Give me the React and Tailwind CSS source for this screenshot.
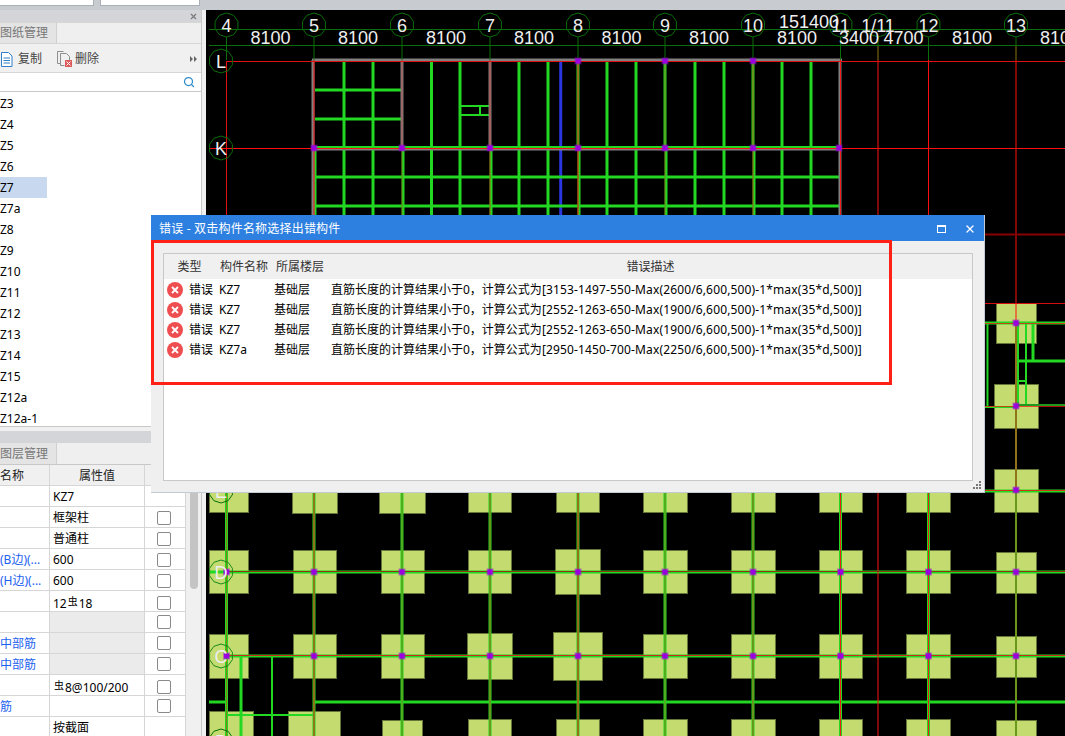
import React from 'react';
import { Search, X } from 'lucide-react';

const FONT = { fontFamily: '"Noto Sans", "Noto Sans CJK SC", sans-serif' };

const listItems = ['Z3', 'Z4', 'Z5', 'Z6', 'Z7', 'Z7a', 'Z8', 'Z9', 'Z10', 'Z11', 'Z12', 'Z13', 'Z14', 'Z15', 'Z12a', 'Z12a-1'];

const propRows = [
    { name: '', value: 'KZ7', noCheck: true },
    { name: '', value: '框架柱' },
    { name: '', value: '普通柱' },
    { name: '(B边)(...', value: '600', blue: true },
    { name: '(H边)(...', value: '600', blue: true },
    { name: '', value: 'steel1' },
    { name: '', value: '', gray: true },
    { name: '中部筋', value: '', gray: true, blue: true },
    { name: '中部筋', value: '', gray: true, blue: true },
    { name: '', value: 'steel2' },
    { name: '筋', value: '', blue: true },
    { name: '', value: '按截面', noCheck: true },
];

const errors = [
    { name: 'KZ7', formula: '[3153-1497-550-Max(2600/6,600,500)-1*max(35*d,500)]' },
    { name: 'KZ7', formula: '[2552-1263-650-Max(1900/6,600,500)-1*max(35*d,500)]' },
    { name: 'KZ7', formula: '[2552-1263-650-Max(1900/6,600,500)-1*max(35*d,500)]' },
    { name: 'KZ7a', formula: '[2950-1450-700-Max(2250/6,600,500)-1*max(35*d,500)]' },
];

// 钢筋符号
const Steel = () => <span className="text-[10px] align-[3px] mx-px">虫</span>;

const GREEN = '#22d822';
const RED = '#ff1010';
const DIM = '#0a6e0a';

const colX = [226.5, 314, 402, 490, 578, 665, 753, 840.5, 928.5, 1016];
const axes = [
    [226.5, '4'], [314, '5'], [402, '6'], [490, '7'], [578, '8'], [665, '9'], [753, '10'],
    [840.5, '11'], [878, '1/11'], [928.5, '12'], [1016, '13'],
];
const dims = [[270.5, '8100'], [358, '8100'], [446, '8100'], [534, '8100'], [621.5, '8100'], [709, '8100'], [797, '8100'], [859, '3400'], [903.5, '4700'], [972, '8100'], [1060, '8100']];
const upperBars = [344, 373, 431.5, 460, 519, 548, 607, 636, 695, 724, 782, 811];

// 竖向轴线的红色在图中深浅不一
const redOpacity = { 226.5: 0.45, 314: 0.95, 402: 0.4, 490: 0.6, 578: 1, 665: 0.4, 753: 0.6, 840.5: 0.9, 928.5: 0.9, 1016: 0.65 };

const pillars = [
    [209, 469, 39, 43], [292, 469, 45, 44], [379, 469, 46, 44], [468, 469, 43, 43], [556, 469, 43, 43],
    [643, 469, 44, 43], [731, 469, 44, 43], [819, 469, 43, 43], [906, 469, 44, 43], [994, 469, 44, 43],
    [209, 550, 39, 43], [293, 550, 43, 43], [381, 550, 43, 43], [468, 550, 43, 43], [555, 549, 45, 45],
    [643, 550, 44, 43], [731, 550, 44, 43], [819, 550, 43, 43], [906, 550, 44, 43], [996, 552, 40, 41],
    [209, 634, 39, 44], [293, 634, 43, 44], [381, 634, 43, 44], [467, 633, 45, 46], [553, 632, 49, 48],
    [643, 634, 44, 44], [731, 634, 44, 44], [819, 634, 43, 44], [906, 634, 44, 44], [996, 636, 40, 41],
    [209, 711, 44, 30], [288, 711, 52, 30], [382, 720, 40, 20], [468, 719, 43, 20], [556, 719, 43, 20],
    [643, 719, 44, 20], [731, 719, 44, 20], [819, 719, 43, 20], [906, 719, 44, 20], [996, 720, 40, 20],
    [996, 303, 40, 40], [994, 384, 44, 44],
];

const octagon = (cx, cy, r) => {
    const pts = [];
    for (let i = 0; i < 10; i++) {
        const a = (Math.PI * 2 * i) / 10 + Math.PI / 10;
        pts.push(`${(cx + r * Math.cos(a)).toFixed(1)},${(cy + r * Math.sin(a)).toFixed(1)}`);
    }
    return pts.join(' ');
};

const Node = ({ x, y }) => (
    <g>
        <rect x={x - 3.5} y={y - 3.5} width="7" height="7" fill="#9a00e0" opacity="0.45" />
        <rect x={x - 2.5} y={y - 2.5} width="5" height="5" fill="#9a00e0" />
    </g>
);

const Canvas = () => (
    <svg viewBox="206 10 859 726" className="block w-[859px] h-[726px] bg-black" style={{ fontFamily: '"Liberation Sans", sans-serif' }}>
        {/* 柱 */}
        {pillars.map(([x, y, w, h], i) => (
            <rect key={i} x={x + 0.5} y={y + 0.5} width={w} height={h} fill="#c3db6f" stroke="#66763a" />
        ))}

        {/* 上部梁 */}
        {upperBars.map((x) => (
            <line key={x} x1={x} y1={61} x2={x} y2={230} stroke={GREEN} strokeWidth="3" />
        ))}
        <line x1="560.7" y1="61" x2="560.7" y2="230" stroke="#2a36e0" strokeWidth="3" />
        {[314, 402, 490, 578, 665, 753].map((x) => (
            <line key={x} x1={x + 1} y1={148} x2={x + 1} y2={230} stroke={GREEN} strokeWidth="3" />
        ))}
        <line x1="578" y1="61" x2="578" y2="148" stroke={GREEN} strokeWidth="3" />
        <line x1="665" y1="61" x2="665" y2="148" stroke={GREEN} strokeWidth="3" />
        <line x1="753" y1="61" x2="753" y2="148" stroke={GREEN} strokeWidth="3" />
        {[90, 119].map((y) => (
            <line key={y} x1="315" y1={y} x2="401" y2={y} stroke={GREEN} strokeWidth="3" />
        ))}
        {[177, 206].map((y) => (
            <line key={y} x1="315" y1={y} x2="840" y2={y} stroke={GREEN} strokeWidth="3" />
        ))}
        <line x1="461" y1="106" x2="489" y2="106" stroke={GREEN} strokeWidth="2" />
        <line x1="461" y1="115" x2="489" y2="115" stroke={GREEN} strokeWidth="2" />
        <line x1="480" y1="106" x2="480" y2="115" stroke={GREEN} strokeWidth="2" />

        {/* 灰色边梁 */}
        <line x1="312" y1="60" x2="842" y2="60" stroke="#808080" strokeWidth="3" />
        <line x1="313" y1="60" x2="313" y2="230" stroke="#808080" strokeWidth="3" />
        <line x1="402" y1="60" x2="402" y2="148" stroke="#808080" strokeWidth="3" />
        <line x1="490" y1="60" x2="490" y2="148" stroke="#808080" strokeWidth="3" />
        <line x1="840" y1="60" x2="840" y2="230" stroke="#808080" strokeWidth="3" />
        <line x1="314" y1="149" x2="840" y2="149" stroke="#808080" strokeWidth="3" />
        <line x1="315" y1="147" x2="840" y2="147" stroke={GREEN} strokeWidth="2" />

        {/* 下部梁 */}
        {colX.slice(0, 9).map((x) => (
            <line key={x} x1={x} y1={493} x2={x} y2={736} stroke={GREEN} strokeWidth="3" />
        ))}
        {[572, 656].map((y) => (
            <line key={y} x1={y === 656 ? 226 : 209} y1={y} x2="1065" y2={y} stroke={GREEN} strokeWidth="3" />
        ))}
        <line x1="209" y1="702" x2="226" y2="702" stroke={GREEN} strokeWidth="3" />
        <line x1="315" y1="702" x2="1065" y2="702" stroke={GREEN} strokeWidth="3" />
        <line x1="241" y1="656" x2="241" y2="736" stroke={GREEN} strokeWidth="3" />
        <line x1="272" y1="656" x2="272" y2="736" stroke={GREEN} strokeWidth="2" />
        <line x1="226" y1="715" x2="314" y2="715" stroke={GREEN} strokeWidth="2" />

        {/* 右侧梁 */}
        <line x1="985" y1="323" x2="1065" y2="323" stroke={GREEN} strokeWidth="3" />
        <line x1="987.5" y1="323" x2="987.5" y2="406" stroke={GREEN} strokeWidth="2" />
        <line x1="1018" y1="323" x2="1018" y2="405" stroke={GREEN} strokeWidth="2" />
        <line x1="1026" y1="323" x2="1026" y2="405" stroke={GREEN} strokeWidth="2" />
        <line x1="1033" y1="323" x2="1033" y2="361" stroke={GREEN} strokeWidth="3" />
        <line x1="1018" y1="361" x2="1065" y2="361" stroke={GREEN} strokeWidth="3" />
        <line x1="1018" y1="381" x2="1026" y2="381" stroke={GREEN} strokeWidth="2" />
        <line x1="985" y1="407" x2="1016" y2="407" stroke={GREEN} strokeWidth="2" />
        <line x1="1016" y1="405" x2="1065" y2="405" stroke="#1f9a1f" strokeWidth="2" />
        <line x1="1016" y1="323" x2="1016" y2="736" stroke={GREEN} strokeWidth="2" />
        <line x1="985" y1="491" x2="1065" y2="491" stroke={GREEN} strokeWidth="3" />

        {/* 轴线 */}
        <line x1="226.5" y1="61" x2="226.5" y2="470" stroke="#e01010" />
        <line x1="878" y1="45" x2="878" y2="736" stroke={RED} />
        <line x1="928.5" y1="45" x2="928.5" y2="469" stroke={RED} />
        <line x1="1016" y1="45" x2="1016" y2="323" stroke={RED} />
        <line x1="1016" y1="323" x2="1016" y2="493" stroke={RED} />
        {colX.map((x) => (
            <line key={x} x1={x} y1="493" x2={x} y2="736" stroke={RED} opacity={redOpacity[x]} />
        ))}
        {[314, 402, 490, 578, 665, 753, 840.5].map((x) => (
            <line key={x} x1={x} y1="60" x2={x} y2="230" stroke={RED} opacity={redOpacity[x]} />
        ))}
        <line x1="226" y1="61.5" x2="1065" y2="61.5" stroke="#e01010" />
        <line x1="209" y1="148.5" x2="1065" y2="148.5" stroke={RED} />
        <line x1="985" y1="234.5" x2="1065" y2="234.5" stroke="#8a0000" strokeWidth="2" />
        <line x1="985" y1="303.5" x2="1065" y2="303.5" stroke="#d01010" />
        <line x1="985" y1="323.5" x2="1065" y2="323.5" stroke={RED} opacity="0.7" />
        <line x1="985" y1="406.5" x2="1065" y2="406.5" stroke={RED} opacity="0.7" />
        <line x1="985" y1="490.5" x2="1065" y2="490.5" stroke={RED} opacity="0.8" />
        <line x1="226" y1="571.5" x2="1065" y2="571.5" stroke="#8a3a10" />
        <line x1="226" y1="655.5" x2="1065" y2="655.5" stroke="#c8301a" />

        {/* 尺寸线 */}
        <line x1="209" y1="29.5" x2="1065" y2="29.5" stroke={DIM} />
        <line x1="209" y1="45.5" x2="1065" y2="45.5" stroke={DIM} />
        {axes.map(([x, label]) => (
            <g key={label}>
                <line x1={x} y1="37" x2={x} y2="60" stroke={DIM} />
                <polygon points={octagon(x, 25, 12)} fill="none" stroke={DIM} />
                <text x={x} y="32" textAnchor="middle" fontSize="18" fill="#eeeeee">{label}</text>
            </g>
        ))}
        {dims.map(([x, label], i) => (
            <text key={i} x={x} y="44" textAnchor="middle" fontSize="18" fill="#eeeeee">{label}</text>
        ))}
        <text x="809" y="28" textAnchor="middle" fontSize="18" fill="#eeeeee">151400</text>

        {/* 节点 */}
        {[[578, 61], [665, 61], [753, 61], [314, 148], [402, 148], [490, 148], [578, 148], [665, 148], [753, 148], [839, 148], [1016, 323], [1016, 406], [1016, 490]].map(([x, y]) => (
            <Node key={`${x}-${y}`} x={x} y={y} />
        ))}
        {[572, 656].flatMap((y) => colX.map((x) => <Node key={`${x}-${y}`} x={x} y={y} />))}

        {/* 左侧轴号 */}
        {[[61, 'L'], [148, 'K'], [491, 'E'], [572, 'D'], [656, 'C'], [741, 'B']].map(([y, label]) => (
            <g key={label}>
                <polygon points={octagon(221, y, 12)} fill="none" stroke={label === 'D' || label === 'C' ? '#1a8a1a' : DIM} />
                <text x="221" y={y + 7} textAnchor="middle" fontSize="18" fill="#eeeeee">{label}</text>
            </g>
        ))}
    </svg>
);

const CopyIcon = () => (
    <svg width="13" height="17" viewBox="0 0 13 17" className="shrink-0">
        <path d="M1.500 1.500h7l3.500 3.500v10.500h-10.500z" fill="#fff" stroke="#2f7fc9" />
        <path d="M3.500 7h6.500M3.500 9.500h6.500M3.500 12h6.500" stroke="#2f7fc9" />
    </svg>
);

const DeleteIcon = () => (
    <svg width="15" height="16" viewBox="0 0 15 16" className="shrink-0">
        <path d="M0.500 0.500h6M0.500 0.500v12h3" fill="none" stroke="#8f8f8f" />
        <path d="M3.500 2.500h6l3 3v4M3.500 2.500v12h4" fill="none" stroke="#8f8f8f" />
        <rect x="8" y="9" width="7" height="7" fill="#dc5a5a" />
        <path d="M9.500 10.500l4 4M13.500 10.500l-4 4" stroke="#fff" />
    </svg>
);

const ErrorIcon = () => (
    <svg width="16" height="16" viewBox="0 0 16 16" className="shrink-0">
        <circle cx="8" cy="8" r="8" fill="#ef4e50" />
        <path d="M5 5l6 6M11 5l-6 6" stroke="#fff" strokeWidth="1.800" />
    </svg>
);

const LeftPanel = () => (
    <aside className="w-[206px] shrink-0 flex flex-col bg-[#f0f0f0] h-full overflow-hidden text-xs text-[#222]">
        <div className="w-[202px] flex flex-col flex-1 min-h-0 border-r border-[#c8c8c8]">
            {/* 图纸管理 */}
            <div className="h-[12px] bg-[#d3d5d9] flex items-center justify-end pr-[3px]">
                <X size={9} strokeWidth={3} className="text-[#777]" />
            </div>
            <div className="h-[22px] flex bg-[#efefef] border-y border-[#d6d6d6]">
                <div className="w-[57px] bg-[#e4e4e4] border-r border-[#d0d0d0] text-[#777] flex items-center">图纸管理</div>
            </div>
            <div className="h-[29px] flex items-center pt-[2px] bg-[#f0f0f0] border-b border-[#d6d6d6]">
                <CopyIcon />
                <span className="ml-[5px] text-[#444]">复制</span>
                <span className="ml-[15px]"><DeleteIcon /></span>
                <span className="ml-[3px] text-[#444]">删除</span>
                <svg width="8" height="6" viewBox="0 0 8 6" className="ml-auto mr-[3px]">
                    <path d="M0 0l3 3-3 3zM4 0l3 3-3 3z" fill="#666" />
                </svg>
            </div>
            <div className="h-[19px] bg-white border-b border-[#c8c8c8] flex items-center justify-end pr-[6px]">
                <Search size={12} strokeWidth={2.500} className="text-[#2f8ccb]" />
            </div>
            <ul className="h-[334px] bg-white overflow-hidden pt-px">
                {listItems.map((item) => (
                    <li
                        key={item}
                        className={`h-[21px] w-[47px] leading-[21px] text-black whitespace-nowrap ${item === 'Z7' ? 'bg-[#c7d8ef]' : ''}`}
                    >
                        {item}
                    </li>
                ))}
            </ul>

            {/* 图层管理 */}
            <div className="h-[5px] border-t border-[#c8c8c8] bg-[#f0f0f0]" />
            <div className="h-[12px] bg-[#d3d5d9]" />
            <div className="h-[22px] bg-[#efefef] border-b border-[#c8c8c8] flex">
                <div className="w-[57px] bg-[#e4e4e4] border-r border-[#d0d0d0] text-[#777] flex items-center">图层管理</div>
            </div>
            <div className="flex flex-1 min-h-0 bg-white">
                <div className="w-[186px] shrink-0">
                    <div className="grid grid-cols-[50px_95px_41px] h-[21px] bg-[#f0f0f0] border-b border-[#d6d6d6] leading-[21px]">
                        <div className="border-r border-[#d6d6d6]">名称</div>
                        <div className="border-r border-[#d6d6d6] text-center">属性值</div>
                        <div className="border-r border-[#d6d6d6]" />
                    </div>
                    {propRows.map((row, i) => (
                        <div key={i} className="grid grid-cols-[50px_95px_41px] h-[21px] border-b border-[#d6d6d6] leading-[21px]">
                            <div className={`border-r border-[#d6d6d6] whitespace-nowrap overflow-hidden ${row.blue ? 'text-[#1c62f0]' : ''}`}>{row.name}</div>
                            <div className={`border-r border-[#d6d6d6] pl-[3px] text-black ${row.gray ? 'bg-[#ebebeb]' : ''}`}>
                                {row.value === 'steel1' ? <>12<Steel />18</> : row.value === 'steel2' ? <><Steel />8@100/200</> : row.value}
                            </div>
                            <div className="border-r border-[#d6d6d6] flex items-center justify-center pr-[2px]">
                                {!row.noCheck && <span className="w-[14px] h-[14px] bg-white border border-[#8a8a8a] rounded-[2px]" />}
                            </div>
                        </div>
                    ))}
                </div>
                <div className="flex-1 bg-[#f0f0f0] pl-[4px]">
                    <div className="w-[8px] h-[124px] bg-[#c4c4c4] rounded-b" />
                </div>
            </div>
        </div>
    </aside>
);

const ErrorDialog = () => (
    <div className="absolute left-[151px] top-[215px] w-[834px] h-[278px] flex flex-col bg-[#efefef] border-b border-r border-[#c4cad4] text-xs text-[#222]">
        <div className="h-[26px] shrink-0 bg-[#2d7fe0] flex items-center pt-px pl-[8px] pr-[8px] text-white">
            <span className="flex-1 tracking-[0.2px]">错误 - 双击构件名称选择出错构件</span>
            <svg width="9" height="8" viewBox="0 0 9 8" className="mr-[18px]">
                <rect x="0.500" y="0.500" width="8" height="7" fill="none" stroke="#fff" />
                <rect x="0" y="0" width="9" height="2" fill="#fff" />
            </svg>
            <X size={12} strokeWidth={2.500} className="text-white" />
        </div>
        <div className="flex-1 min-h-0 pl-[12px] pr-[11px] pt-[12px] pb-[11px] flex flex-col">
            <div className="flex-1 min-h-0 bg-white border border-[#c8c8c8]">
                <div className="h-[25px] bg-[#f0f0f0] flex gap-[2px] leading-[26px] text-[#333]">
                    <div className="w-[51px] text-center">类型</div>
                    <div className="w-[54px] text-center">构件名称</div>
                    <div className="w-[54px] text-center">所属楼层</div>
                    <div className="flex-1 text-center">错误描述</div>
                </div>
                <div className="pt-px">
                    {errors.map((e, i) => (
                        <div key={i} className="flex items-center h-[20px] whitespace-nowrap text-black">
                            <span className="w-[25px] pl-[3px]"><ErrorIcon /></span>
                            <span className="w-[30px]">错误</span>
                            <span className="w-[55px]">{e.name}</span>
                            <span className="w-[57px]">基础层</span>
                            <span>直筋长度的计算结果小于0，计算公式为</span>
                            <span className="tracking-[0.14px]">{e.formula}</span>
                        </div>
                    ))}
                </div>
            </div>
        </div>
        <svg width="8" height="8" viewBox="0 0 8 8" className="absolute right-[3px] bottom-[3px]">
            <path d="M6 0h2v2h-2zM3 3h2v2h-2zM6 3h2v2h-2zM0 6h2v2h-2zM3 6h2v2h-2zM6 6h2v2h-2z" fill="#777" />
        </svg>
    </div>
);

export default function App() {
    return (
        <div className="relative w-[1065px] h-[736px] overflow-hidden flex flex-col bg-[#f0f0f0]" style={FONT}>
            <div className="h-[10px] shrink-0 bg-[#c8ccd0] flex items-start">
                <div className="w-[94px] h-[6px] bg-white border-r border-b border-[#aab0b8]" />
                <div className="w-[100px] h-[6px] ml-[6px] bg-white border-x border-b border-[#aab0b8]" />
            </div>
            <div className="flex flex-1 min-h-0">
                <LeftPanel />
                <Canvas />
            </div>
            <ErrorDialog />
            {/* 红色标注框 */}
            <div className="absolute left-[151px] top-[240px] w-[741px] h-[145px] border-[3px] border-[#ff2116] pointer-events-none" />
        </div>
    );
}
